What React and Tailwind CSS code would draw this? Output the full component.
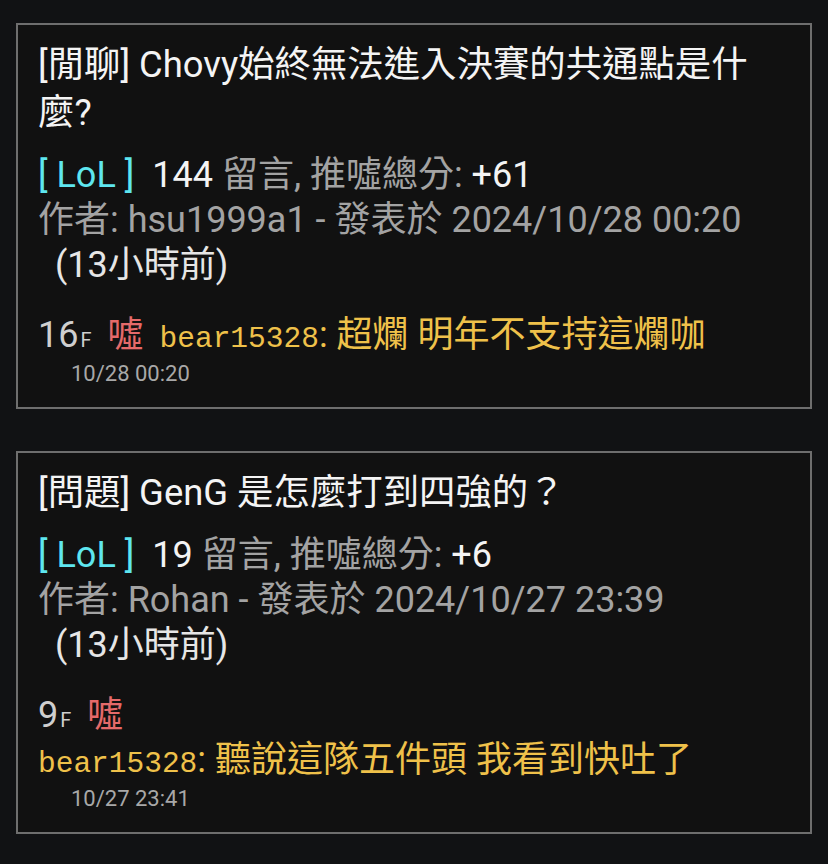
const posts = [
  {
    title: '[閒聊] Chovy始終無法進入決賽的共通點是什麼?',
    board: 'LoL',
    count: 144,
    score: '+61',
    author: 'hsu1999a1',
    date: '2024/10/28 00:20',
    ago: '13小時前',
    comment: { floor: 16, tag: '噓', user: 'bear15328', text: '超爛 明年不支持這爛咖', time: '10/28 00:20' },
  },
  {
    title: '[問題] GenG 是怎麼打到四強的？',
    board: 'LoL',
    count: 19,
    score: '+6',
    author: 'Rohan',
    date: '2024/10/27 23:39',
    ago: '13小時前',
    comment: { floor: 9, tag: '噓', user: 'bear15328', text: '聽說這隊五件頭 我看到快吐了', time: '10/27 23:41' },
  },
];

const PostCard = ({ post }) => {
  const c = post.comment;
  return (
    <div className="border-2 border-[#6e6e6e] bg-[#111111] px-5 pt-4 pb-5">
      {/* Title */}
      <h2 className="text-[36.4px] leading-[48px] font-normal text-[#f4f4f4]">{post.title}</h2>

      {/* Meta */}
      <div className="mt-4 text-[36px] leading-[45px] text-[#a3a3a3]">
        <div>
          <span className="mr-[18px] text-[#5ee6ef]">[ {post.board} ]</span>
          <span className="text-[#f4f4f4]">{post.count}</span> 留言, 推噓總分:{' '}
          <span className="text-[#f4f4f4]">{post.score}</span>
        </div>
        <div>
          作者: {post.author} - 發表於 {post.date}
        </div>
        <div className="pl-[17px] text-[#e6e6e6]">({post.ago})</div>
      </div>

      {/* Latest comment */}
      <div className="mt-[25px] flex flex-wrap items-baseline gap-x-[16px] text-[36px] leading-[45px]">
        <span className="text-[#cfcfcf]">
          {c.floor}
          <span className="ml-[2px] text-[20px] leading-none text-[#cfcfcf]">F</span>
        </span>
        <span className="text-[#e56a6a]">{c.tag}</span>
        <span className="text-[#efc14a]">
          <span className="text-[29.5px] leading-none font-['Liberation_Mono','Courier_New',monospace]">{c.user}</span>
          : {c.text}
        </span>
      </div>
      <div className="mt-[3px] pl-[33px] text-[22px] leading-[26px] text-[#a8a8a8]">{c.time}</div>
    </div>
  );
};

const App = () => {
  return (
    <div className="min-h-screen bg-[#111214] px-4 pt-[23px] pb-8 font-['Roboto','Noto_Sans_CJK_TC',sans-serif]">
      <div className="flex flex-col gap-[42px]">
        {posts.map((post) => (
          <PostCard key={post.author} post={post} />
        ))}
      </div>
    </div>
  );
};

export default App;
